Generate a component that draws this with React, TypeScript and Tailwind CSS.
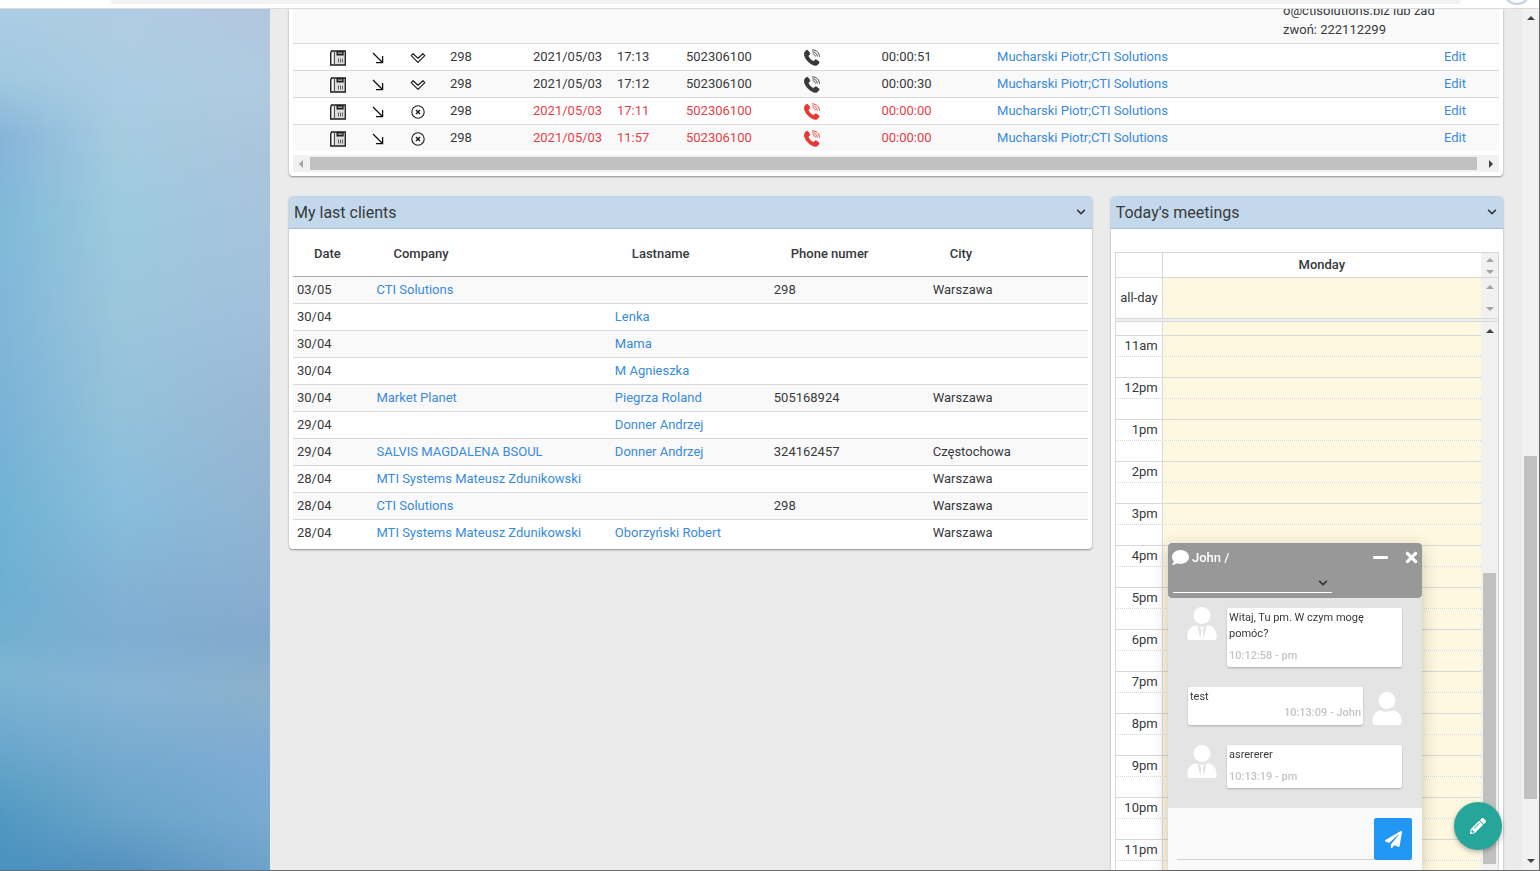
import type { ReactNode } from 'react'
import { FaChevronDown, FaComment, FaMinus, FaPaperPlane, FaPencilAlt, FaTimes } from 'react-icons/fa'
import clsx from 'clsx'

type Call = { ext: string; date: string; time: string; number: string; duration: string; client: string; missed: boolean }

const CALLS: Call[] = [
  { ext: '298', date: '2021/05/03', time: '17:13', number: '502306100', duration: '00:00:51', client: 'Mucharski Piotr;CTI Solutions', missed: false },
  { ext: '298', date: '2021/05/03', time: '17:12', number: '502306100', duration: '00:00:30', client: 'Mucharski Piotr;CTI Solutions', missed: false },
  { ext: '298', date: '2021/05/03', time: '17:11', number: '502306100', duration: '00:00:00', client: 'Mucharski Piotr;CTI Solutions', missed: true },
  { ext: '298', date: '2021/05/03', time: '11:57', number: '502306100', duration: '00:00:00', client: 'Mucharski Piotr;CTI Solutions', missed: true },
]

// date, company, lastname, phone, city
const CLIENTS = [
  ['03/05', 'CTI Solutions', '', '298', 'Warszawa'],
  ['30/04', '', 'Lenka', '', ''],
  ['30/04', '', 'Mama', '', ''],
  ['30/04', '', 'M Agnieszka', '', ''],
  ['30/04', 'Market Planet', 'Piegrza Roland', '505168924', 'Warszawa'],
  ['29/04', '', 'Donner Andrzej', '', ''],
  ['29/04', 'SALVIS MAGDALENA BSOUL', 'Donner Andrzej', '324162457', 'Częstochowa'],
  ['28/04', 'MTI Systems Mateusz Zdunikowski', '', '', 'Warszawa'],
  ['28/04', 'CTI Solutions', '', '298', 'Warszawa'],
  ['28/04', 'MTI Systems Mateusz Zdunikowski', 'Oborzyński Robert', '', 'Warszawa'],
]

const HOURS = ['11am', '12pm', '1pm', '2pm', '3pm', '4pm', '5pm', '6pm', '7pm', '8pm', '9pm', '10pm', '11pm']

const ARROWS = {
  up: 'M0 4 4 0l4 4z',
  down: 'M0 0h8L4 4z',
  left: 'M4 0v8L0 4z',
  right: 'M0 0v8l4-4z',
}

function ScrollArrow({ dir, dim }: { dir: keyof typeof ARROWS; dim?: boolean }) {
  const vertical = dir === 'up' || dir === 'down'
  return (
    <svg
      className={clsx('shrink-0', dim ? 'text-[#a3a3a3]' : 'text-[#404040]')}
      width={vertical ? 8 : 4}
      height={vertical ? 4 : 8}
      fill="currentColor"
      aria-hidden="true"
    >
      <path d={ARROWS[dir]} />
    </svg>
  )
}

function DeskPhoneIcon() {
  return (
    <svg className="mx-auto block" width="16" height="16" viewBox="0 0 16 16" aria-hidden="true">
      <path d="M1.500 1h13.800v14H.7V3z" fill="#dcdcdc" stroke="#1c1c1c" strokeWidth="1.300" />
      <path d="M4.500 1v14" stroke="#555" strokeWidth="1" />
      <path d="M2.500 2.500v11.500" stroke="#fff" strokeWidth="1" />
      <path d="M6.500 1h7.200v4.600H6.500z" fill="#1f1f1f" />
      <path d="M8 2.600h4.400v1.200H8z" fill="#b4b4b4" />
      <path d="M8.500 8.500v4M10.500 8.500v4M12.500 8.500v4" stroke="#666" strokeWidth="1" />
    </svg>
  )
}

function OutgoingIcon() {
  return (
    <svg className="mx-auto block" width="12" height="12" viewBox="0 0 12 12" fill="none" stroke="#111" strokeWidth="1.300" aria-hidden="true">
      <path d="M1 1l9.500 9.500M10.600 4v6.700H4" />
    </svg>
  )
}

function AnsweredIcon() {
  return (
    <svg className="mx-auto block" width="16" height="12" viewBox="0 0 16 12" fill="none" stroke="#222" strokeWidth="1.200" strokeLinejoin="round" aria-hidden="true">
      <path d="M1.200 3.600 3.100 1.700 8 6.200l4.900-4.500 1.900 1.900L8 10.400z" />
    </svg>
  )
}

function MissedIcon() {
  return (
    <svg className="mx-auto block" width="14" height="14" viewBox="0 0 14 14" fill="none" stroke="#1c1c1c" aria-hidden="true">
      <circle cx="7" cy="7" r="6.200" strokeWidth="1.100" />
      <path d="m5 5 4 4M9 5 5 9" strokeWidth="1.500" />
    </svg>
  )
}

function CallIcon() {
  return (
    <svg className="mx-auto block" width="17" height="17" viewBox="0 0 17 17" fill="none" stroke="currentColor" aria-hidden="true">
      <path
        d="M1.200 2.600C2 1.600 3.300.9 4 1.600l1.700 2.600c.4.8 0 1.400-1 2.100-.5.5-.3 1 0 1.700.9 1.700 2.400 3.200 4 4 .6.3 1.100.4 1.600-.1.7-.9 1.300-1.300 2.100-.9l2.300 1.500c.7.6.4 1.500-.5 2.600-1.100 1.400-3.200 1.600-5.200.7C5.100 14.200 2.100 11 .8 7.300.2 5.500.3 3.800 1.200 2.600z"
        fill="currentColor"
        strokeWidth=".8"
      />
      <path d="M8.600 4.800c1.500 0 2.600 1.100 2.700 2.700M8.300 2.800c2.900 0 4.900 2 5 4.800M8 .8c4.500.1 7.400 2.900 7.500 7" strokeWidth=".9" />
    </svg>
  )
}

function Avatar({ agent }: { agent?: boolean }) {
  return (
    <svg className="shrink-0" width="30" height="33" viewBox="0 0 30 33" fill="#fff" aria-hidden="true">
      <circle cx="15" cy="8.500" r="8.500" />
      <path d="M9 18.500c4 1.600 8 1.600 12 0 5 .5 8.500 4.500 8.500 9.500v3c0 1.200-.8 2-2 2h-25c-1.200 0-2-.8-2-2v-3c0-5 3.500-9 8.500-9.500z" />
      {agent && <path d="m10.500 19.500 2.800 12 1-8-1.300-3.500zM19.500 19.500l-2.800 12-1-8 1.300-3.500z" fill="#e4e4e4" />}
    </svg>
  )
}

function PanelHeader({ title }: { title: string }) {
  return (
    <header className="flex h-[33px] items-center justify-between border-b border-[#a9bfcf] bg-[#c3d9eb] pr-1.5 pl-[5px]">
      <h2 className="pt-px text-base leading-6">{title}</h2>
      <button type="button" aria-label={`Collapse ${title}`}>
        <FaChevronDown className="size-2.5" />
      </button>
    </header>
  )
}

function Panel({ className, children }: { className?: string; children: ReactNode }) {
  return <section className={clsx('overflow-hidden bg-white shadow-[0_1px_2px_rgba(0,0,0,0.4)]', className)}>{children}</section>
}

function CallsPanel() {
  return (
    <Panel className="rounded-b px-1 pb-1">
      <table className="w-full table-fixed">
        <colgroup>
          <col className="w-[25px]" />
          <col className="w-10" />
          <col className="w-10" />
          <col className="w-10" />
          <col className="w-[91px]" />
          <col className="w-[84px]" />
          <col className="w-[69px]" />
          <col className="w-24" />
          <col className="w-[68px]" />
          <col className="w-[121px]" />
          <col className="w-[231px]" />
          <col />
          <col className="w-[157px]" />
          <col className="w-[63px]" />
        </colgroup>
        <tbody>
          <tr className="border-b border-[#d8d8d8] bg-[#f9f9f9]">
            <td colSpan={12} />
            <td className="h-[34px] p-0">
              {/* tail of a longer note, scrolled under the top edge */}
              <div className="flex h-[33px] flex-col justify-end overflow-hidden pb-0.5 pl-1 leading-5 whitespace-nowrap">
                <div className="-mb-px shrink-0">o@ctisolutions.biz lub zad</div>
                <div className="shrink-0">zwoń: 222112299</div>
              </div>
            </td>
            <td />
          </tr>
          {CALLS.map((call, i) => (
            <tr key={i} className="h-[27px] border-b border-[#d8d8d8] last:border-0 even:bg-white odd:bg-[#f9f9f9]">
              <td />
              <td className="pt-0.5"><DeskPhoneIcon /></td>
              <td className="pt-0.5"><OutgoingIcon /></td>
              <td className="pt-0.5">{call.missed ? <MissedIcon /> : <AnsweredIcon />}</td>
              <td className="pl-3">{call.ext}</td>
              <td className={clsx('pl-1', call.missed && 'text-[#e53f47]')}>{call.date}</td>
              <td className={clsx('pl-1', call.missed && 'text-[#e53f47]')}>{call.time}</td>
              <td className={clsx('pl-1', call.missed && 'text-[#e53f47]')}>{call.number}</td>
              <td className={clsx('pt-0.5', call.missed && 'text-[#e53935]')}><CallIcon /></td>
              <td className={clsx('text-center', call.missed && 'text-[#e53f47]')}>{call.duration}</td>
              <td className="text-center"><a href="#client" className="text-[#3a8ade]">{call.client}</a></td>
              <td />
              <td />
              <td className="pl-2"><a href="#edit" className="text-[#3a8ade]">Edit</a></td>
            </tr>
          ))}
        </tbody>
      </table>
      <div className="mt-1 flex h-[17px] items-center bg-[#f1f1f1] px-1.5">
        <ScrollArrow dir="left" dim />
        <div className="mr-3 ml-[7px] h-[13px] flex-1 bg-[#c1c1c1]" />
        <ScrollArrow dir="right" />
      </div>
    </Panel>
  )
}

function ClientsPanel() {
  return (
    <Panel className="flex-[802] rounded">
      <PanelHeader title="My last clients" />
      <div className="px-1 pb-[3px]">
        <table className="w-full table-fixed">
          <colgroup>
            <col className="w-[10%]" />
            <col className="w-[30%]" />
            <col className="w-1/5" />
            <col className="w-1/5" />
            <col className="w-1/5" />
          </colgroup>
          <thead>
            <tr className="h-[47px] border-b border-[#a8abae] text-left">
              {['Date', 'Company', 'Lastname', 'Phone numer', 'City'].map(label => (
                <th key={label} className="pt-1 pl-[21px] font-medium">{label}</th>
              ))}
            </tr>
          </thead>
          <tbody>
            {CLIENTS.map(([date, company, lastname, phone, city], i) => (
              <tr key={i} className="h-[27px] border-b border-[#d8d8d8] last:border-0 odd:bg-[#f9f9f9]">
                <td className="pl-1">{date}</td>
                <td className="pl-1 whitespace-nowrap">{company && <a href="#company" className="text-[#3a8ade]">{company}</a>}</td>
                <td className="pl-1 whitespace-nowrap">{lastname && <a href="#person" className="text-[#3a8ade]">{lastname}</a>}</td>
                <td className="pl-1">{phone}</td>
                <td className="pl-1">{city}</td>
              </tr>
            ))}
          </tbody>
        </table>
      </div>
    </Panel>
  )
}

function MeetingsPanel() {
  return (
    <Panel className="flex flex-[392] flex-col self-stretch rounded-t">
      <PanelHeader title="Today's meetings" />
      <div className="mx-1 mt-[23px] flex min-h-0 flex-1 flex-col border border-b-0 border-[#d8d8d8]">
        <div className="flex h-[25px] border-b border-[#d8d8d8]">
          <div className="w-[47px] border-r border-[#d8d8d8]" />
          <div className="flex-1 text-center leading-6 font-medium">Monday</div>
          <div className="flex w-[17px] flex-col items-center justify-between bg-[#f1f1f1] pt-[5px] pb-[3px]">
            <ScrollArrow dir="up" dim />
            <ScrollArrow dir="down" dim />
          </div>
        </div>
        <div className="flex h-10">
          <div className="w-[47px] border-r border-[#d8d8d8] pr-1 text-right leading-10">all-day</div>
          <div className="flex-1 bg-[#fff8e1]" />
          <div className="flex w-[17px] flex-col items-center justify-between bg-[#f1f1f1] py-[7px]">
            <ScrollArrow dir="up" dim />
            <ScrollArrow dir="down" dim />
          </div>
        </div>
        <div className="h-1 shrink-0 border-y border-[#d8d8d8] bg-[#eee]" />
        <div className="flex min-h-0 flex-1 overflow-hidden">
          <div className="min-w-0 flex-1">
            <div className="flex h-[13px]">
              <div className="w-[47px] border-r border-[#d8d8d8]" />
              <div className="flex-1 bg-[#fff8e1]" />
            </div>
            {HOURS.map(hour => (
              <div key={hour}>
                <div className="flex h-[21px] border-t border-[#d8d8d8]">
                  <div className="w-[47px] border-r border-[#d8d8d8] pr-1 text-right leading-5">{hour}</div>
                  <div className="flex-1 bg-[#fff8e1]" />
                </div>
                <div className="flex h-[21px] border-t border-dotted border-[#d8d8d8]">
                  <div className="w-[47px] border-r border-[#d8d8d8]" />
                  <div className="flex-1 bg-[#fff8e1]" />
                </div>
              </div>
            ))}
          </div>
          <div className="flex w-[17px] flex-col items-center bg-[#f1f1f1] pt-[7px] pb-1.5">
            <ScrollArrow dir="up" />
            <div className="flex-[240]" />
            <div className="w-[13px] flex-[291] bg-[#c1c1c1]" />
          </div>
        </div>
      </div>
    </Panel>
  )
}

function Bubble({ text, meta, own }: { text: string; meta: string; own?: boolean }) {
  return (
    <div className={clsx('w-[175px] rounded-xs bg-white px-0.5 pt-0.5 text-[11px] leading-4 shadow-[0_1px_2px_rgba(0,0,0,0.25)]', own ? 'pb-1' : 'pb-[3px]')}>
      <p>{text}</p>
      <p className={clsx('font-medium text-[#c4c4c4]', own ? 'text-right' : 'pt-1.5')}>{meta}</p>
    </div>
  )
}

function ChatWindow() {
  return (
    <aside className="fixed right-[118px] bottom-px w-[254px] bg-[#fafafa] shadow-[0_4px_16px_rgba(0,0,0,0.22)]">
      <header className="h-[55px] rounded bg-[#989898] pt-1 pr-0.5 pl-1 text-white">
        <div className="flex h-[21px] items-center">
          <FaComment className="size-[17px]" />
          <span className="ml-[3px] flex-1 font-medium">John /</span>
          <button type="button" aria-label="Minimize"><FaMinus className="size-[17px]" /></button>
          <button type="button" aria-label="Close" className="ml-3.5"><FaTimes className="size-[17px]" /></button>
        </div>
        <div className="relative ml-px h-[25px] w-[159px] border-b border-white">
          <select aria-label="Department" className="h-full w-full appearance-none outline-none" />
          <FaChevronDown className="pointer-events-none absolute right-1 bottom-1 size-2.5 text-[#333]" />
        </div>
      </header>
      <div className="flex h-[210px] flex-col gap-5 bg-[#e4e4e4] pt-[9px] pr-5 pl-[19px]">
        <div className="flex items-end justify-between">
          <div className="self-start"><Avatar agent /></div>
          <div className="pt-px"><Bubble text="Witaj, Tu pm. W czym mogę pomóc?" meta="10:12:58 - pm" /></div>
        </div>
        <div className="flex items-end justify-between pl-px">
          <Bubble text="test" meta="10:13:09 - John" own />
          <Avatar />
        </div>
        <div className="flex items-start justify-between">
          <Avatar agent />
          <Bubble text="asrererer" meta="10:13:19 - pm" />
        </div>
      </div>
      <form className="flex h-[62px] items-start pt-2.5 pr-2.5 pl-[9px]">
        <input aria-label="Message" className="h-[42px] min-w-0 flex-1 border-b border-[#d0d0d0] outline-none" />
        <button type="button" aria-label="Send" className="flex h-[42px] w-[38px] items-center justify-center rounded-xs bg-[#2196f3] text-white">
          <FaPaperPlane className="size-[17px]" />
        </button>
      </form>
    </aside>
  )
}

// Blurred sky: right-hand colours at the back, centre and left tones faded in over them
function Backdrop() {
  return (
    <div className="w-[270px] shrink-0 bg-[linear-gradient(180deg,#b3c7df_0%,#b0cbe0_9%,#abc5de_16%,#a8c4dd_24%,#a2c0dc_35%,#9bb8d4_46%,#92b4d2_58%,#8aaed0_68%,#84a9cc_73%,#8cb1cc_79%,#80acd4_87%,#7aabd0_94%,#6fa3cc_100%)]">
      <div className="h-full bg-[linear-gradient(180deg,#b0cce2_0%,#aacde4_9%,#a4cbe0_16%,#9ccade_24%,#9bc6dc_35%,#94c2da_46%,#88bddc_58%,#82b1d4_68%,#7eaed2_73%,#86b4d6_79%,#76aace_87%,#68a3c9_94%,#5592be_100%)] [mask-image:linear-gradient(to_right,#000_45%,transparent_100%)]">
        <div className="h-full bg-[linear-gradient(180deg,#abcde4_0%,#a0c8de_8%,#86b4d9_15%,#80b8d8_24%,#80b6d8_35%,#7ab2d6_46%,#70b2d2_58%,#6dafd0_68%,#72b0d0_73%,#7eb5d4_77%,#66a5ca_87%,#5098c0_94%,#4a92c0_100%)] [mask-image:linear-gradient(to_right,#000_0%,transparent_42%)]" />
      </div>
    </div>
  )
}

export default function App() {
  return (
    <div className="flex h-screen flex-col overflow-hidden border-r border-b border-[#6b6b6b] bg-[#ebebeb] font-[Roboto,sans-serif] text-[13px] leading-5 text-[#37393c]">
      {/* bottom edge of the browser toolbar */}
      <div className="relative h-[9px] shrink-0 overflow-hidden border-b border-[#d9dadc] bg-white pr-[78px] pl-[110px]">
        <div className="h-1 rounded-b-full bg-[#f1f3f4]" />
        <div className="absolute right-2 bottom-[3px] size-7 rounded-full border-2 border-[#c3d1ee]" />
      </div>
      <div className="flex min-h-0 flex-1">
        <Backdrop />
        <main className="flex min-w-0 flex-1 flex-col gap-5 overflow-hidden px-[19px]">
          <CallsPanel />
          <div className="flex min-h-0 flex-1 items-start gap-[19px]">
            <ClientsPanel />
            <MeetingsPanel />
          </div>
        </main>
        <div className="flex w-[17px] shrink-0 flex-col items-center bg-[#f1f1f1] py-[7px]">
          <ScrollArrow dir="up" />
          <div className="flex-[435]" />
          <div className="w-[13px] flex-[343] bg-[#c1c1c1]" />
          <div className="flex-[60]" />
          <ScrollArrow dir="down" />
        </div>
      </div>
      <ChatWindow />
      <button
        type="button"
        aria-label="New note"
        className="fixed right-[38px] bottom-[21px] flex size-12 items-center justify-center rounded-full bg-[#26a69a] text-white shadow-[0_2px_5px_rgba(0,0,0,0.3)]"
      >
        <FaPencilAlt className="size-4" />
      </button>
    </div>
  )
}
